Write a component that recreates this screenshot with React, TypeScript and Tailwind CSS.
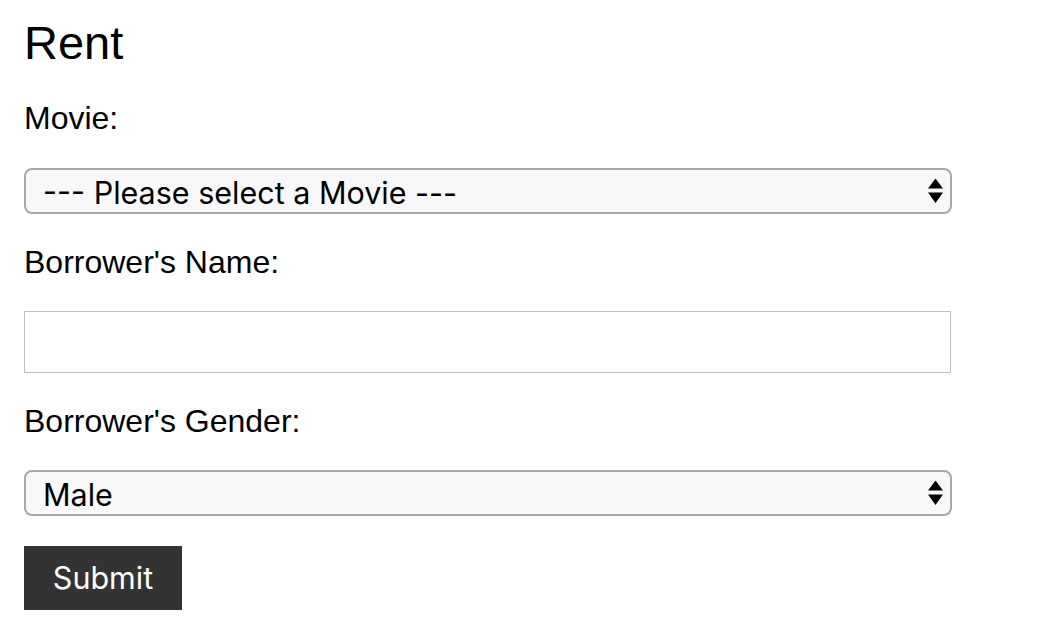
import { useState } from "react";

// Up/down chevron pair drawn like the native macOS select arrows
const SelectArrows = () => (
  <svg
    width="15"
    height="25"
    viewBox="0 0 15 25"
    className="pointer-events-none absolute right-[9px] top-1/2 -translate-y-1/2"
  >
    <path d="M7.5 0 L15 10 L0 10 Z" fill="#000" />
    <path d="M0 14 L15 14 L7.5 24.5 Z" fill="#000" />
  </svg>
);

type SelectFieldProps = {
  value: string;
  options: string[];
  onChange: (v: string) => void;
};

const SelectField = ({ value, options, onChange }: SelectFieldProps) => (
  <div className="relative w-[928px]">
    <select
      value={value}
      onChange={(e) => onChange(e.target.value)}
      className="block h-[46px] w-full appearance-none rounded-[8px] border-2 border-[#a8a8a8] bg-[#f8f8f8] pb-[2px] pl-[17px] pr-10 font-['Inter',sans-serif] text-[30.5px] text-black outline-none"
    >
      {options.map((o) => (
        <option key={o} value={o}>
          {o}
        </option>
      ))}
    </select>
    <SelectArrows />
  </div>
);

const Label = ({ children }: { children: React.ReactNode }) => (
  <label className="block text-[32px] leading-[36px] text-black">{children}</label>
);

export default function App() {
  const [movie, setMovie] = useState("--- Please select a Movie ---");
  const [name, setName] = useState("");
  const [gender, setGender] = useState("Male");

  return (
    <div className="min-h-screen bg-white px-[24px] pt-[17px] font-['Liberation_Sans',Arial,sans-serif]">
      <h1 className="text-[47px] leading-[52px] text-black">Rent</h1>

      <form className="flex flex-col" onSubmit={(e) => e.preventDefault()}>
        <div className="mt-[31px]">
          <Label>Movie:</Label>
        </div>
        <div className="mt-[32px]">
          <SelectField
            value={movie}
            onChange={setMovie}
            options={["--- Please select a Movie ---", "The Godfather", "Casablanca", "Jaws"]}
          />
        </div>

        <div className="mt-[30px]">
          <Label>Borrower's Name:</Label>
        </div>
        <input
          type="text"
          value={name}
          onChange={(e) => setName(e.target.value)}
          className="mt-[31px] block h-[62px] w-[927px] border border-[#c2c2c2] bg-white px-3 text-[30px] outline-none"
        />

        <div className="mt-[30px]">
          <Label>Borrower's Gender:</Label>
        </div>
        <div className="mt-[31px]">
          <SelectField value={gender} onChange={setGender} options={["Male", "Female"]} />
        </div>

        <div className="mt-[30px]">
          <button
            type="submit"
            className="h-[64px] w-[158px] bg-[#333333] font-['Inter',sans-serif] text-[30.5px] text-white"
          >
            Submit
          </button>
        </div>
      </form>
    </div>
  );
}
